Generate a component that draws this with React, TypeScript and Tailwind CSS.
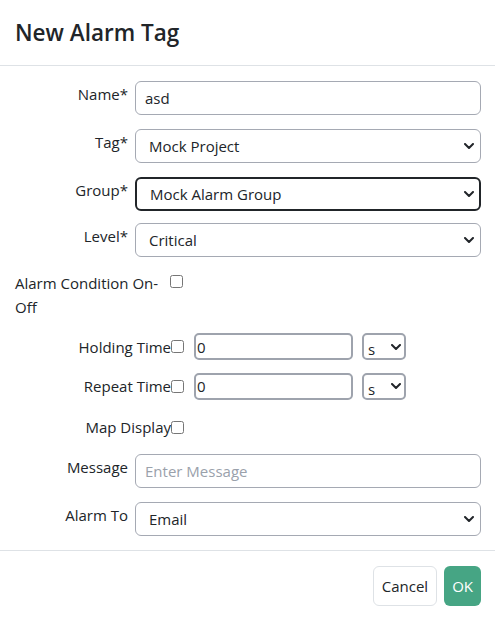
import React from "react";

const Chevron = ({ right = "right-[7px]" }: { right?: string }) => (
  <svg
    width="10"
    height="6"
    viewBox="0 0 10 6"
    className={`pointer-events-none absolute top-1/2 -translate-y-1/2 ${right}`}
  >
    <path d="M1 1l4 4 4-4" fill="none" stroke="#212529" strokeWidth="2" strokeLinecap="round" strokeLinejoin="round" />
  </svg>
);

const Select = ({ value, focused }: { value: string; focused?: boolean }) => (
  <div className="relative">
    <select
      defaultValue={value}
      className={`h-[34px] w-full appearance-none rounded-[6px] bg-white pl-[13px] text-[#212529] outline-none ${
        focused ? "border-2 border-[#212529] pl-[12px]" : "border border-[#a5a9b3]"
      }`}
    >
      <option>{value}</option>
    </select>
    <Chevron />
  </div>
);

const Row = ({ label, className, children }: { label: string; className?: string; children: React.ReactNode }) => (
  <div className={`flex items-start ${className ?? ""}`}>
    <label className="w-[135px] shrink-0 pr-[7px] pt-[1px] text-right leading-6">{label}</label>
    <div className="flex-1">{children}</div>
  </div>
);

const Check = () => (
  <input type="checkbox" className="h-[13px] w-[13px] shrink-0" />
);

const TimeRow = ({ label, className }: { label: string; className?: string }) => (
  <div className={`flex items-center ${className ?? ""}`}>
    <label className="w-[171px] shrink-0 text-right leading-6">{label}</label>
    <Check />
    <input
      defaultValue="0"
      className="ml-[10px] h-[27px] w-[159px] rounded-[5px] border-2 border-[#9ea3ad] bg-white pl-[1px] text-[#212529] outline-none"
    />
    <div className="relative ml-[9px]">
      <select
        defaultValue="s"
        className="h-[27px] w-[44px] appearance-none rounded-[5px] border-2 border-[#9ea3ad] bg-white pl-[4px] pt-[3px] text-[#212529] outline-none"
      >
        <option>s</option>
      </select>
      <Chevron right="right-[5px]" />
    </div>
  </div>
);

export default function App() {
  return (
    <div className="h-[622px] w-[495px] bg-white font-['Open_Sans',sans-serif] text-[15px] text-[#212529]">
      <div className="flex h-[66px] items-center border-b border-[#dee2e6] px-[15px]">
        <h4 className="text-[22.5px] font-semibold">New Alarm Tag</h4>
      </div>

      <div className="flex flex-col pb-[14px] pr-[14px] pt-[15px]">
        <Row label="Name*">
          <input
            defaultValue="asd"
            className="h-[34px] w-full rounded-[6px] border border-[#a5a9b3] bg-white pl-[9px] outline-none"
          />
        </Row>
        <Row label="Tag*" className="mt-[14px]">
          <Select value="Mock Project" />
        </Row>
        <Row label="Group*" className="mt-[14px]">
          <Select value="Mock Alarm Group" focused />
        </Row>
        <Row label="Level*" className="mt-[12px]">
          <Select value="Critical" />
        </Row>

        <div className="mt-[14px] flex items-start">
          <label className="ml-[15px] w-[153px] leading-6">Alarm Condition On-Off</label>
          <div className="ml-[2px]">
            <Check />
          </div>
        </div>

        <TimeRow label="Holding Time" className="mt-[14px]" />
        <TimeRow label="Repeat Time" className="mt-[12px]" />

        <div className="mt-[15px] flex items-center">
          <label className="w-[171px] shrink-0 text-right leading-6">Map Display</label>
          <Check />
        </div>

        <Row label="Message" className="mt-[15px]">
          <input
            placeholder="Enter Message"
            className="h-[34px] w-full rounded-[6px] border border-[#a5a9b3] bg-white pl-[9px] outline-none placeholder:text-[#9aa1ab]"
          />
        </Row>
        <Row label="Alarm To" className="mt-[14px]">
          <Select value="Email" />
        </Row>
      </div>

      <div className="flex justify-end gap-[7px] border-t border-[#dee2e6] pr-[14px] pt-[15px]">
        <button className="h-[40px] rounded-[6px] border border-[#dee2e6] bg-white px-[8px] text-[#212529]">
          Cancel
        </button>
        <button className="h-[40px] rounded-[6px] bg-[#46a584] px-[8px] text-white">OK</button>
      </div>
    </div>
  );
}
